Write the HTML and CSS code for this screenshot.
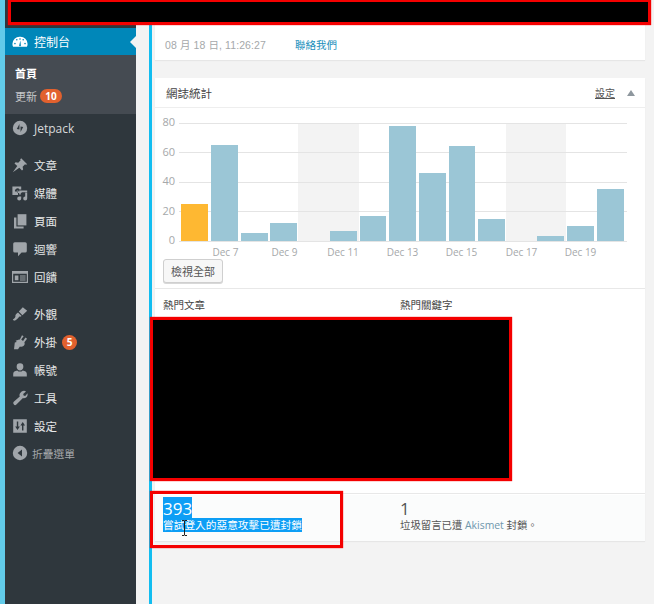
FILE: index.html
```html
<!DOCTYPE html>
<html lang="zh-Hant">
<head>
<meta charset="utf-8">
<title>控制台</title>
<link rel="stylesheet" href="styles.css">
</head>
<body>
<div class="page">
  <aside class="sidebar">
    <nav class="menu">
      <a class="item active"><svg class="ic" viewBox="0 0 20 20"><path d="M10 3.500a9 9 0 0 0-9.500 9c0 1.300.3 2.500.9 3.500h17.200c.6-1 .9-2.200.9-3.500a9 9 0 0 0-9.500-9zM6 6.200a1 1 0 1 1 0 2 1 1 0 0 1 0-2zm4-1a1 1 0 1 1 0 2 1 1 0 0 1 0-2zM3.700 11a1 1 0 1 1 0 2 1 1 0 0 1 0-2zm12.600 0a1 1 0 1 1 0 2 1 1 0 0 1 0-2zM14 6.200a1 1 0 1 1 0 2 1 1 0 0 1 0-2zM9 14l1.500-6 .6 6a1.100 1.100 0 1 1-2.100 0z" fill="#fff" fill-rule="evenodd"/></svg><span>控制台</span><i class="arrow"></i></a>
      <div class="sub">
        <a class="sub-item current">首頁</a>
        <a class="sub-item">更新 <b class="pill">10</b></a>
      </div>
      <a class="item jet"><svg class="ic" viewBox="0 0 20 20"><circle cx="10" cy="10" r="9" fill="#a0a5aa"/><path d="M9.300 5v7l-3.300-.6zM10.700 15v-7l3.300.6z" fill="#2f373d"/></svg><span>Jetpack</span></a>
      <a class="item gap"><svg class="ic" viewBox="0 0 20 20"><path d="M11.500 1.500l7.500 7.500-1.700.8-1-.6-3 3 .6 3.300-1.400 1.400-3.300-3.500L1 19l5.600-7.700-3.500-3.300 1.400-1.400 3.300.6 3-3-.6-1z" fill="#a0a5aa"/></svg><span>文章</span></a>
      <a class="item"><svg class="ic" viewBox="0 0 20 20"><path fill-rule="evenodd" d="M.5 2h11v3.500H9.300a2.500 2.500 0 0 0-4.600 0H.5zM.5 5.500h3.200V8h3.800v4.500H.5z M5.500 8.500a1.500 1.500 0 1 1 3 0H12v1.500H8z" fill="#a0a5aa"/><path d="M9 7h10v2h-8v3H9z" fill="#a0a5aa"/><path d="M16.500 9.500H19v7.500a2.500 2.500 0 1 1-2.500-2.500zM9 14.500h2.500V17A2.500 2.500 0 1 1 9 14.500z" fill="#a0a5aa"/></svg><span>媒體</span></a>
      <a class="item"><svg class="ic" viewBox="0 0 20 20"><path d="M7 1.500h11v14H7z" fill="#a0a5aa"/><path d="M2.500 5.500h3v11.500h9v2.500h-12z" fill="#a0a5aa"/></svg><span>頁面</span></a>
      <a class="item"><svg class="ic" viewBox="0 0 20 20"><path d="M3.500 1.500h13a2 2 0 0 1 2 2v9a2 2 0 0 1-2 2h-4.500l-4.500 4.500v-4.500h-4a2 2 0 0 1-2-2v-9a2 2 0 0 1 2-2z" fill="#a0a5aa"/></svg><span>迴響</span></a>
      <a class="item"><svg class="ic" viewBox="0 0 20 20"><path fill-rule="evenodd" d="M0 2.500h20v15H0zM1.500 6h17v10h-17zM3.500 8h4.500v6H3.500zM10 8h7v1.500h-7zM10 10.500h7V12h-7zM10 13h7v1.500h-7z" fill="#a0a5aa"/></svg><span>回饋</span></a>
      <a class="item gap"><svg class="ic" viewBox="0 0 20 20"><path d="M13.500 1.500l5.500 4.500-6 5.500-4.500-4.500zM7.500 8l4.500 4.500c-1 .8-2.200 1-3 .6-.8 1.800-3.800 5-6.500 5.400L1 17c2-1.300 3.500-3.200 3.300-4.300-.6-1.200.8-3.300 3.200-4.700z" fill="#a0a5aa"/></svg><span>外觀</span></a>
      <a class="item"><svg class="ic" viewBox="0 0 20 20"><path d="M12.500 1.500l2 1.300-3 4.200 2.300 1.700 3-4.200 2 1.500-3.300 4.400c.8 2 .2 3.600-1.200 4.700-1.300 1-3 1.300-4.400.5L7.500 19H2.500l1-8.500 2.500-.4-1.500-1.600 4.500-1.500c.3-.1.500 0 .7.100z" fill="#a0a5aa"/></svg><span>外掛</span><b class="pill round">5</b></a>
      <a class="item"><svg class="ic" viewBox="0 0 20 20"><path d="M10 1.500a4.200 4.200 0 0 1 4.200 4.300c0 2.400-1.700 4.700-4.200 4.700S5.800 8.200 5.800 5.800A4.200 4.200 0 0 1 10 1.500zM6.500 10.500c1 1 2.200 1.500 3.500 1.500s2.500-.5 3.500-1.500c2.700.5 5 1.800 5 4.200V18h-17v-3.300c0-2.400 2.300-3.700 5-4.200z" fill="#a0a5aa"/></svg><span>帳號</span></a>
      <a class="item"><svg class="ic" viewBox="0 0 20 20"><path d="M15 1c1 0 1.800.3 2.500.8L14 5l.5 2 2 .5 2.900-3.300c.5 2.500-.3 4.500-2.200 5.500-1.300.7-2.500.7-3.500.3L5.500 18a2.100 2.100 0 0 1-3.300-.3 2.100 2.100 0 0 1 0-3l7.500-6.500c-.5-1.200-.5-2.500.2-3.800C11 2.500 13 1 15 1z" fill="#a0a5aa"/></svg><span>工具</span></a>
      <a class="item"><svg class="ic" viewBox="0 0 20 20"><path fill-rule="evenodd" d="M1.500 1.500h17v17h-17zM6 4.500h1.800v6h2L6.900 15 4 10.500h2zM12.500 15.500v-6h-2L13.400 5l2.900 4.500h-2v6z" fill="#a0a5aa"/></svg><span>設定</span></a>
      <a class="item collapse"><svg class="ic" viewBox="0 0 20 20"><path fill-rule="evenodd" d="M10 1a9 9 0 1 1 0 18 9 9 0 0 1 0-18zM12.500 5.500L7 10l5.500 4.500z" fill="#a0a5aa"/></svg><span>折疊選單</span></a>
    </nav>
  </aside>
  <main class="content">
    <section class="card top-card">
      <span class="time">08 月 18 日, 11:26:27</span>
      <a class="contact">聯絡我們</a>
    </section>
    <section class="card stats">
      <header class="stats-head">
        <h2>網誌統計</h2>
        <a class="config">設定</a>
        <i class="caret"></i>
      </header>
      <div class="chart-wrap">
        <svg class="chart" width="490" height="150" viewBox="155 108 490 150">
          <rect class="band" x="298" y="123" width="61" height="118"/>
          <rect class="band" x="506" y="123" width="60" height="118"/>
          <g class="grid">
            <path d="M179 123.500H627M179 152.500H627M179 182.500H627M179 211.500H627M179 241.500H627"/>
          </g>
          <g class="ylab">
            <text x="175" y="126">80</text>
            <text x="175" y="156">60</text>
            <text x="175" y="185">40</text>
            <text x="175" y="215">20</text>
            <text x="175" y="244">0</text>
          </g>
          <rect class="bar hot" x="181" y="204" width="27" height="37"/>
          <g class="bars">
            <rect x="211" y="145" width="27" height="96"/>
            <rect x="241" y="233" width="27" height="8"/>
            <rect x="270" y="223" width="27" height="18"/>
            <rect x="330" y="231" width="27" height="10"/>
            <rect x="360" y="216" width="26" height="25"/>
            <rect x="389" y="126" width="27" height="115"/>
            <rect x="419" y="173" width="27" height="68"/>
            <rect x="449" y="146" width="26" height="95"/>
            <rect x="478" y="219" width="27" height="22"/>
            <rect x="537" y="236" width="27" height="5"/>
            <rect x="567" y="226" width="27" height="15"/>
            <rect x="597" y="189" width="27" height="52"/>
          </g>
          <g class="xlab">
            <text x="225.500" y="256">Dec 7</text>
            <text x="284.500" y="256">Dec 9</text>
            <text x="343" y="256">Dec 11</text>
            <text x="402.500" y="256">Dec 13</text>
            <text x="461.500" y="256">Dec 15</text>
            <text x="521.500" y="256">Dec 17</text>
            <text x="580.500" y="256">Dec 19</text>
          </g>
        </svg>
        <button class="btn">檢視全部</button>
      </div>
      <div class="tops">
        <h3>熱門文章</h3>
        <h3>熱門關鍵字</h3>
      </div>
      <footer class="foot">
        <div class="stat">
          <div class="num sel"><span>393</span></div>
          <div class="desc sel"><span>嘗試登入的惡意攻擊已遭封鎖</span></div>
        </div>
        <div class="stat second">
          <div class="num">1</div>
          <div class="desc small">垃圾留言已遭 <a class="aki">Akismet</a> 封鎖。</div>
        </div>
      </footer>
    </section>
  </main>
  <div class="mask mask-top"></div>
  <div class="mask mask-mid"></div>
  <div class="mask-line"></div>
  <svg class="ibeam" width="7" height="16" viewBox="0 0 7 16"><path d="M1 .5h2l.5.5.5-.5h2M3.500 1v14M1 15.500h2l.5-.5.5.5h2" fill="none" stroke="#222" stroke-width="1"/></svg>
</div>
</body>
</html>
```

FILE: styles.css
```css
* { box-sizing: border-box; }
html, body { margin: 0; padding: 0; }
body {
  width: 654px;
  height: 604px;
  overflow: hidden;
  background: #f3f3f3;
  font-family: "Open Sans", "Noto Sans CJK TC", sans-serif;
  font-size: 12px;
  color: #444;
}
.page {
  position: relative;
  display: flex;
  width: 654px;
  height: 604px;
  border-left: 5px solid #62cbe9;
}
.sidebar {
  width: 131px;
  flex: none;
  background: #2f373d;
  padding-top: 28px;
}
.menu { display: flex; flex-direction: column; }
.item {
  position: relative;
  display: flex;
  align-items: center;
  height: 28px;
  padding-left: 7px;
  color: #e6e7e8;
  font-size: 11.500px;
}
.item span { margin-left: 6px; }
.item.gap { margin-top: 9px; }
.ic { width: 16px; height: 16px; flex: none; }
.active { background: #0087b9; color: #fff; height: 27px; font-size: 12px; }
.arrow {
  position: absolute;
  right: 0;
  top: 8px;
  border: 6px solid transparent;
  border-left-width: 0;
  border-right-color: #f3f3f3;
}
.sub {
  background: #454b52;
  height: 59px;
  padding: 6px 0 0 10px;
  display: flex;
  flex-direction: column;
}
.sub-item {
  display: flex;
  align-items: center;
  gap: 3px;
  height: 23px;
  font-size: 11px;
  color: #c5c7c9;
}
.sub-item.current { color: #fff; font-weight: 700; }
.pill {
  display: inline-block;
  min-width: 22px;
  height: 14px;
  padding: 0 4px;
  border-radius: 8px;
  background: #e2612e;
  color: #fff;
  font: 700 10px/14px "Open Sans", sans-serif;
  text-align: center;
}
.pill.round { min-width: 15px; width: 15px; height: 15px; padding: 0; margin-left: 5px; line-height: 15px; }
.jet { color: #d8d9da; font-size: 12px; }
.collapse { color: #a3a6a9; font-size: 10.750px; margin-top: -1px; }
.collapse span { margin-left: 4px; }
.content {
  width: 518px;
  flex: none;
  margin-left: 13px;
  border-left: 3px solid #12bdf0;
  padding: 0 0 0 3px;
}
.card {
  width: 490px;
  background: #fff;
  box-shadow: 0 1px 1px rgba(0, 0, 0, .05);
}
.top-card {
  padding: 28px 0 0 10px;
  display: flex;
  align-items: center;
  height: 60px;
  font-size: 10.500px;
  color: #a5a8aa;
}
.time { width: 130px; font-family: "Liberation Sans", "Noto Sans CJK TC", sans-serif; letter-spacing: .1px; }
.contact { color: #1a8fbb; font-size: 10.500px; }
.stats { margin-top: 18px; }
.stats-head {
  display: flex;
  align-items: center;
  height: 30px;
  padding: 0 10px 0 11px;
  border-bottom: 1px solid #eee;
}
.stats-head h2 { margin: 0; font-size: 11.500px; font-weight: 400; color: #444; flex: 1; }
.config { color: #555; font-size: 10px; text-decoration: underline; }
.caret {
  margin-left: 12px;
  border: 4px solid transparent;
  border-top-width: 0;
  border-bottom: 6px solid #8e979e;
}
.chart-wrap { height: 181px; border-bottom: 1px solid #e8e8e8; display: flex; flex-direction: column; }
.chart { display: block; flex: none; }
.band { fill: #f3f3f3; }
.grid path { stroke: #e4e4e4; stroke-width: 1; fill: none; }
.ylab text { fill: #a5a8aa; font: 11px "Open Sans", sans-serif; text-anchor: end; }
.xlab text { fill: #a5a8aa; font: 10px "Open Sans", sans-serif; text-anchor: middle; }
.bars rect { fill: #9bc6d6; }
.hot { fill: #feb832; }
.btn {
  width: 60px;
  height: 24px;
  margin: 1px 0 0 8px;
  padding: 0;
  border: 1px solid #cfcfcf;
  border-radius: 3px;
  background: #f7f7f7;
  box-shadow: 0 1px 0 #d8d8d8;
  color: #555;
  font: 11px "Noto Sans CJK TC", sans-serif;
}
.tops {
  display: grid;
  grid-template-columns: 237px 1fr;
  height: 205px;
  padding: 8px 0 0 8px;
  background: #fff;
  border-bottom: 1px solid #e8e8e8;
}
.tops h3 { margin: 0; font-size: 10.500px; font-weight: 400; color: #444; }
.foot {
  display: grid;
  grid-template-columns: 237px 1fr;
  height: 46px;
  margin-top: 1px;
  padding: 4px 0 0 8px;
  background: #fbfcfc;
}
.num { font: 17px/19px "Open Sans", sans-serif; color: #555; }
.desc { font-size: 10.700px; line-height: 15px; color: #555; }
.desc.small { font-size: 10.400px; }
.sel span { background: #0d9ef5; color: #fff; }
.aki { color: #6f97ad; }
.mask { position: absolute; background: #000; border: 3px solid #f40000; box-shadow: 0 0 1px #f40000; }
.mask-top { left: 3px; top: -1px; width: 643px; height: 26px; }
.mask-mid { left: 145px; top: 317px; width: 362px; height: 164px; }
.mask-line { position: absolute; left: 145px; top: 491px; width: 193px; height: 57px; border: 3px solid #f40000; box-shadow: 0 0 1px #f40000; }
.ibeam { position: absolute; left: 176px; top: 520px; }
```
